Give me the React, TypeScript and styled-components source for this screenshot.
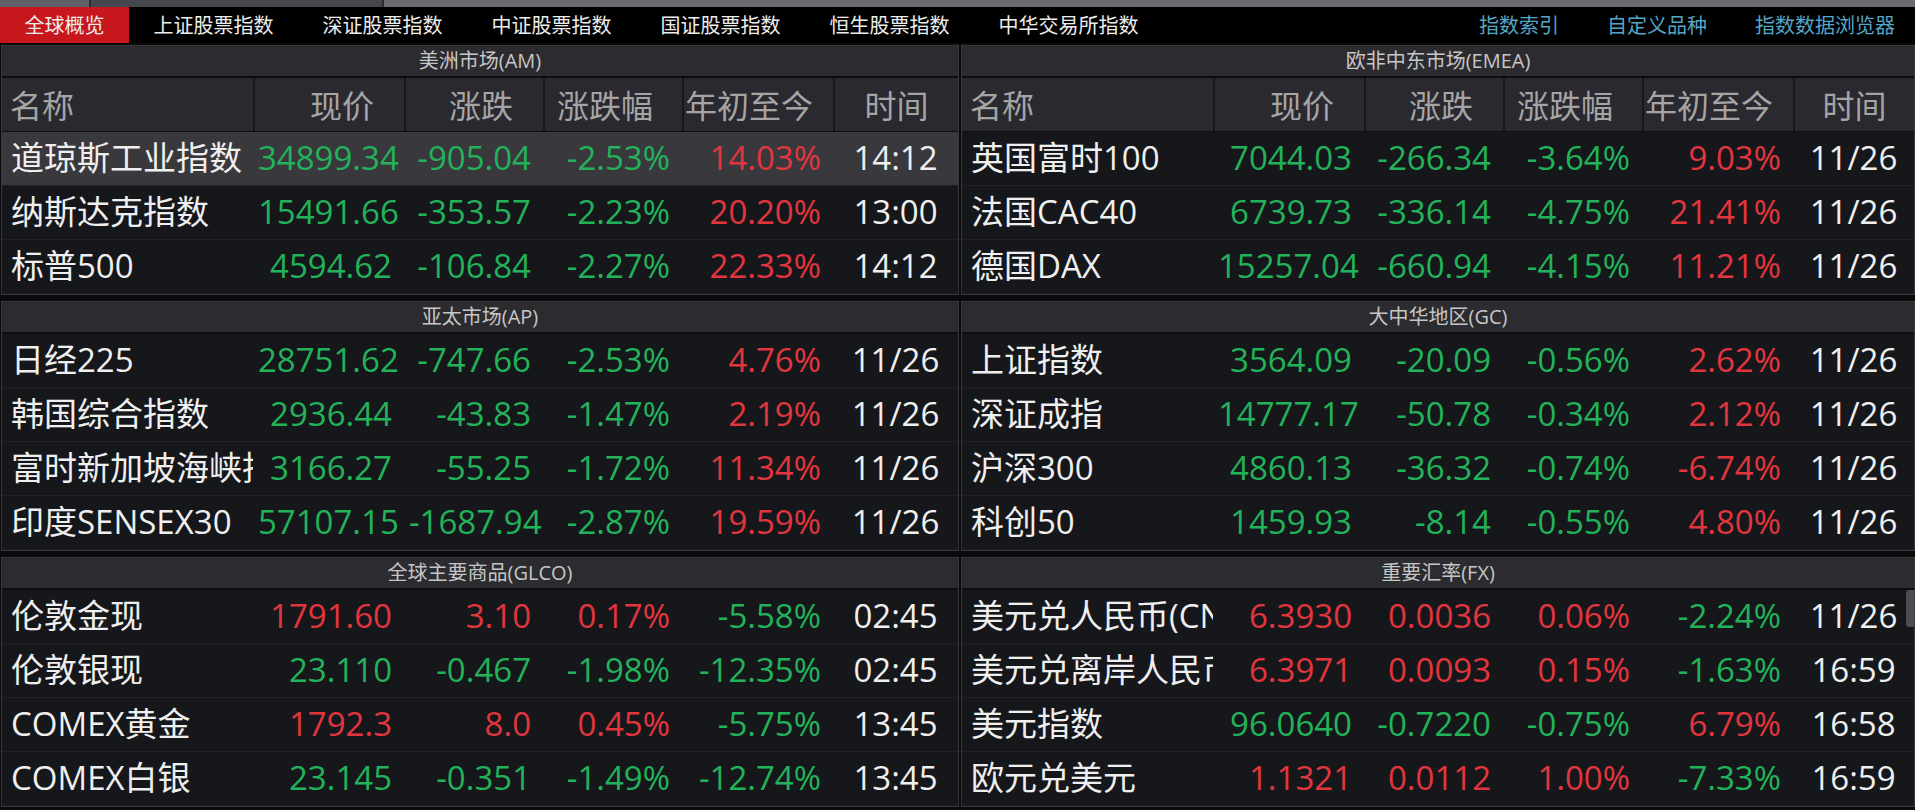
import React from 'react'
import styled, { createGlobalStyle } from 'styled-components'

type Cell = { v: string; up?: boolean }

interface Quote {
  name: string
  price: Cell
  chg: Cell
  pct: Cell
  ytd: Cell
  time: string
}

interface Market {
  title: string
  withHeader?: boolean
  scroll?: boolean
  rows: Quote[]
}

const RED = '#e2353d'
const GREEN = '#22b35a'

// sign decides colour unless given explicitly
const c = (v: string, up?: boolean): Cell => ({ v, up: up ?? !v.startsWith('-') })

const q = (name: string, p: string, ch: string, pc: string, y: string, time: string, priceUp?: boolean, ytdUp?: boolean): Quote => {
  const up = !ch.startsWith('-')
  return { name, price: c(p, priceUp ?? up), chg: c(ch), pct: c(pc), ytd: c(y, ytdUp), time }
}

const markets: Market[] = [
  {
    title: '美洲市场(AM)',
    withHeader: true,
    rows: [
      q('道琼斯工业指数', '34899.34', '-905.04', '-2.53%', '14.03%', '14:12'),
      q('纳斯达克指数', '15491.66', '-353.57', '-2.23%', '20.20%', '13:00'),
      q('标普500', '4594.62', '-106.84', '-2.27%', '22.33%', '14:12'),
    ],
  },
  {
    title: '欧非中东市场(EMEA)',
    withHeader: true,
    rows: [
      q('英国富时100', '7044.03', '-266.34', '-3.64%', '9.03%', '11/26'),
      q('法国CAC40', '6739.73', '-336.14', '-4.75%', '21.41%', '11/26'),
      q('德国DAX', '15257.04', '-660.94', '-4.15%', '11.21%', '11/26'),
    ],
  },
  {
    title: '亚太市场(AP)',
    rows: [
      q('日经225', '28751.62', '-747.66', '-2.53%', '4.76%', '11/26'),
      q('韩国综合指数', '2936.44', '-43.83', '-1.47%', '2.19%', '11/26'),
      q('富时新加坡海峡指数', '3166.27', '-55.25', '-1.72%', '11.34%', '11/26'),
      q('印度SENSEX30', '57107.15', '-1687.94', '-2.87%', '19.59%', '11/26'),
    ],
  },
  {
    title: '大中华地区(GC)',
    rows: [
      q('上证指数', '3564.09', '-20.09', '-0.56%', '2.62%', '11/26'),
      q('深证成指', '14777.17', '-50.78', '-0.34%', '2.12%', '11/26'),
      q('沪深300', '4860.13', '-36.32', '-0.74%', '-6.74%', '11/26', undefined, true),
      q('科创50', '1459.93', '-8.14', '-0.55%', '4.80%', '11/26'),
    ],
  },
  {
    title: '全球主要商品(GLCO)',
    rows: [
      q('伦敦金现', '1791.60', '3.10', '0.17%', '-5.58%', '02:45'),
      q('伦敦银现', '23.110', '-0.467', '-1.98%', '-12.35%', '02:45'),
      q('COMEX黄金', '1792.3', '8.0', '0.45%', '-5.75%', '13:45'),
      q('COMEX白银', '23.145', '-0.351', '-1.49%', '-12.74%', '13:45'),
    ],
  },
  {
    title: '重要汇率(FX)',
    scroll: true,
    rows: [
      q('美元兑人民币(CNY)', '6.3930', '0.0036', '0.06%', '-2.24%', '11/26'),
      q('美元兑离岸人民币(CNH)', '6.3971', '0.0093', '0.15%', '-1.63%', '16:59'),
      q('美元指数', '96.0640', '-0.7220', '-0.75%', '6.79%', '16:58'),
      q('欧元兑美元', '1.1321', '0.0112', '1.00%', '-7.33%', '16:59'),
    ],
  },
]

const tabs = ['全球概览', '上证股票指数', '深证股票指数', '中证股票指数', '国证股票指数', '恒生股票指数', '中华交易所指数']
const links = ['指数索引', '自定义品种', '指数数据浏览器']

const GlobalStyle = createGlobalStyle`
  html, body {
    margin: 0;
    padding: 0;
    background: #0b0b0d;
    overflow: hidden;
  }
  body {
    font-family: "Open Sans", "Noto Sans CJK SC", sans-serif;
  }
`

const Page = styled.div`
  width: 1915px;
  height: 810px;
  overflow: hidden;
  background: #0b0b0d;
`

const TopStrip = styled.div`
  display: flex;
  gap: 2px;
  height: 7px;
  background: #2c2c32;
`

const StripSeg = styled.div<{ $w?: number; $tone: string }>`
  flex: ${p => (p.$w ? `0 0 ${p.$w}px` : '1')};
  background: ${p => p.$tone};
`

const TabBar = styled.div`
  display: flex;
  height: 36px;
  background: #000;
  font-family: "Noto Sans CJK SC", sans-serif;
  font-size: 20px;
  line-height: 1.3;
`

const Tab = styled.div<{ $active?: boolean }>`
  display: flex;
  align-items: center;
  padding: 0 24.5px;
  color: #ededed;
  background: ${p => (p.$active ? '#c8161d' : 'transparent')};
`

const LinkGroup = styled.div`
  margin-left: auto;
  display: flex;
  align-items: center;
  gap: 48px;
  padding-right: 20px;
`

const NavLink = styled.span`
  color: #55a6c6;
`

const Board = styled.div`
  display: grid;
  grid-template-columns: 958px 1fr;
  column-gap: 2px;
  row-gap: 6px;
  padding: 2px 0 0 1px;
`

const Panel = styled.section`
  position: relative;
  box-sizing: border-box;
  height: 250px;
  border: 1px solid #37373c;
  background: #16171b;
  overflow: hidden;
`

const PanelTitle = styled.div`
  height: 30px;
  border-bottom: 2px solid #0d0d0f;
  background: #2c2b30;
  color: #c6c6c6;
  font-size: 20px;
  line-height: 1.3;
  display: flex;
  align-items: center;
  justify-content: center;
`

const Row = styled.div<{ $head?: boolean; $hl?: boolean }>`
  display: grid;
  grid-template-columns: 251px 151px 139px 139px 151px 1fr;
  align-items: center;
  height: 53px;
  border-bottom: 1px solid ${p => (p.$head ? '#101012' : '#202126')};
  background: ${p => (p.$head ? '#2a292f' : p.$hl ? '#39383d' : '#16171b')};
  font-size: 33px;
  line-height: 1.35;
`

const HeadCell = styled.div<{ $align: 'left' | 'right' | 'center'; $pad: number }>`
  height: 100%;
  display: flex;
  align-items: center;
  padding-top: 3px;
  box-sizing: border-box;
  justify-content: ${p => (p.$align === 'left' ? 'flex-start' : p.$align === 'right' ? 'flex-end' : 'center')};
  padding-left: ${p => (p.$align === 'left' ? p.$pad : 0)}px;
  padding-right: ${p => (p.$align === 'right' ? p.$pad : 0)}px;
  color: #a5a5a5;
  font-size: 32px;
  white-space: nowrap;
  & + & {
    border-left: 2px solid #18181c;
  }
`

const NameCell = styled.div`
  padding-left: 9px;
  overflow: hidden;
  white-space: nowrap;
  color: #efefef;
`

const NumCell = styled.div<{ $up?: boolean }>`
  padding: 0 12px 0 5px;
  text-align: right;
  white-space: nowrap;
  color: ${p => (p.$up ? RED : GREEN)};
`

const TimeCell = styled.div`
  text-align: center;
  white-space: nowrap;
  color: #efefef;
`

const ScrollThumb = styled.div`
  position: absolute;
  right: 0;
  top: 32px;
  width: 8px;
  height: 37px;
  border-radius: 3px 0 0 3px;
  background: #4c4c52;
`

const HeaderRow = () => (
  <Row $head>
    <HeadCell $align="left" $pad={8}>名称</HeadCell>
    <HeadCell $align="right" $pad={30}>现价</HeadCell>
    <HeadCell $align="right" $pad={30}>涨跌</HeadCell>
    <HeadCell $align="right" $pad={29}>涨跌幅</HeadCell>
    <HeadCell $align="right" $pad={20}>年初至今</HeadCell>
    <HeadCell $align="center" $pad={0}>时间</HeadCell>
  </Row>
)

const MarketPanel = ({ market, first }: { market: Market; first?: boolean }) => (
  <Panel>
    <PanelTitle>{market.title}</PanelTitle>
    {market.withHeader && <HeaderRow />}
    {market.rows.map((r, i) => (
      <Row key={r.name} $hl={first && i === 0}>
        <NameCell>{r.name}</NameCell>
        <NumCell $up={r.price.up}>{r.price.v}</NumCell>
        <NumCell $up={r.chg.up}>{r.chg.v}</NumCell>
        <NumCell $up={r.pct.up}>{r.pct.v}</NumCell>
        <NumCell $up={r.ytd.up}>{r.ytd.v}</NumCell>
        <TimeCell>{r.time}</TimeCell>
      </Row>
    ))}
    {market.scroll && <ScrollThumb />}
  </Panel>
)

export default function App() {
  return (
    <Page>
      <GlobalStyle />
      <TopStrip>
        <StripSeg $w={89} $tone="#5f5f67" />
        <StripSeg $w={291} $tone="#46464e" />
        <StripSeg $tone="#6a6a72" />
      </TopStrip>
      <TabBar>
        {tabs.map((t, i) => (
          <Tab key={t} $active={i === 0}>{t}</Tab>
        ))}
        <LinkGroup>
          {links.map(l => <NavLink key={l}>{l}</NavLink>)}
        </LinkGroup>
      </TabBar>
      <Board>
        {markets.map((m, i) => (
          <MarketPanel key={m.title} market={m} first={i === 0} />
        ))}
      </Board>
    </Page>
  )
}
